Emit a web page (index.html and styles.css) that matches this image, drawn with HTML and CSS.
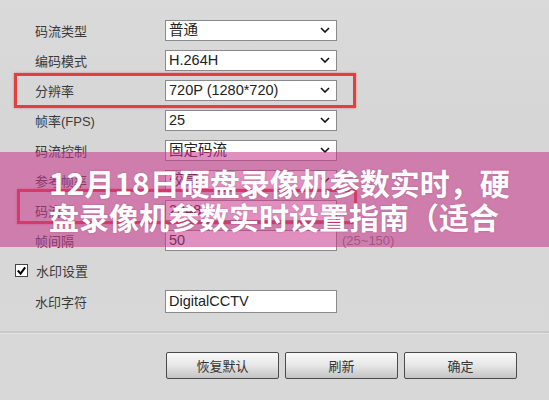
FILE: index.html
```html
<!DOCTYPE html>
<html lang="zh-CN">
<head>
<meta charset="UTF-8" />
<title>硬盘录像机参数设置</title>
<link rel="stylesheet" href="styles.css">
</head>
<body>

<div class="panel">
  <div class="form">
    <div class="row">
      <span class="label">码流类型</span>
      <div class="field select">普通<svg class="chev" viewBox="0 0 10 6"><polyline points="1,1 5,5 9,1"/></svg></div>
    </div>
    <div class="row">
      <span class="label">编码模式</span>
      <div class="field select">H.264H<svg class="chev" viewBox="0 0 10 6"><polyline points="1,1 5,5 9,1"/></svg></div>
    </div>
    <div class="row">
      <span class="label">分辨率</span>
      <div class="field select">720P (1280*720)<svg class="chev" viewBox="0 0 10 6"><polyline points="1,1 5,5 9,1"/></svg></div>
      <div class="mark"></div>
    </div>
    <div class="row">
      <span class="label">帧率(FPS)</span>
      <div class="field select">25<svg class="chev" viewBox="0 0 10 6"><polyline points="1,1 5,5 9,1"/></svg></div>
    </div>
    <div class="row">
      <span class="label">码流控制</span>
      <div class="field select">固定码流<svg class="chev" viewBox="0 0 10 6"><polyline points="1,1 5,5 9,1"/></svg></div>
    </div>
    <div class="row">
      <span class="label">参考帧率</span>
      <div class="field select">较高<svg class="chev" viewBox="0 0 10 6"><polyline points="1,1 5,5 9,1"/></svg></div>
    </div>
    <div class="row">
      <span class="label">码流</span>
      <div class="field">2048</div>
      <div class="mark mark-2"></div>
    </div>
    <div class="row">
      <span class="label">帧间隔</span>
      <div class="field">50</div>
      <span class="hint">(25~150)</span>
    </div>
    <div class="row check-row">
      <span class="check"><svg viewBox="0 0 12 12"><polyline points="2,6 5,9.5 10,2.5"/></svg></span>
      <span class="label">水印设置</span>
    </div>
    <div class="row row-wm">
      <span class="label">水印字符</span>
      <div class="field field-wm">DigitalCCTV</div>
    </div>
  </div>

  <div class="divider"></div>

  <div class="buttons">
    <button class="btn">恢复默认</button>
    <button class="btn">刷新</button>
    <button class="btn">确定</button>
  </div>

  <div class="banner">
    <h1>12月18日硬盘录像机参数实时，硬<br>盘录像机参数实时设置指南（适合</h1>
  </div>
</div>

</body>
</html>
```

FILE: styles.css
```css
body {
  margin: 0;
  background: #d7d7d7;
  font-family: "Liberation Sans", "Noto Sans CJK SC", sans-serif;
  color: #2a2a2a;
}
.panel {
  position: relative;
  width: 549px;
  height: 400px;
  overflow: hidden;
  background: linear-gradient(#dadada, #d6d6d6 30%, #d8d8d8);
}
.form {
  padding-top: 15px;
}
.row {
  position: relative;
  display: flex;
  align-items: center;
  height: 30px;
  padding-left: 35px;
}
.label {
  width: 130px;
  font-size: 13px;
  color: #3a3a3a;
}
.field {
  position: relative;
  box-sizing: border-box;
  width: 172px;
  height: 21px;
  padding: 0 3px;
  background: #fff;
  border: 1px solid #8a8a8a;
  font-size: 14.5px;
  line-height: 19px;
  color: #222;
}
.chev {
  position: absolute;
  right: 6px;
  top: 6px;
  width: 10px;
  height: 6px;
  fill: none;
  stroke: #111;
  stroke-width: 1.6;
}
.hint {
  margin-left: 5px;
  font-size: 13px;
  color: #777;
}

/* red highlight boxes */
.mark {
  position: absolute;
  left: 14px;
  top: -2px;
  width: 342px;
  height: 35px;
  box-sizing: border-box;
  border: 3px solid #e0403f;
  box-shadow: 0 0 2px rgba(226, 59, 59, 0.6);
}
.mark-2 {
  left: 17px;
  top: -6px;
  width: 340px;
}

.check-row {
  padding-left: 15px;
}
.check-row .label {
  margin-left: 8px;
}
.check {
  display: inline-flex;
  box-sizing: border-box;
  width: 13px;
  height: 13px;
  background: #fff;
  border: 1px solid #444;
}
.check svg {
  width: 11px;
  height: 11px;
  fill: none;
  stroke: #000;
  stroke-width: 2.2;
}
.row-wm {
  height: 33px;
}
.field-wm {
  height: 23px;
  line-height: 21px;
}

.divider {
  margin: 13px 0 0;
  height: 2px;
  background: #c9c9c9;
  border-bottom: 1px solid #e2e2e2;
}

.buttons {
  display: flex;
  gap: 6px;
  padding: 18px 0 0 166px;
}
.btn {
  width: 113px;
  height: 27px;
  font-family: "Liberation Sans", "Noto Sans CJK SC", sans-serif;
  font-size: 13px;
  color: #333;
  background: linear-gradient(#fafafa, #e6e6e6 50%, #c4c4c4);
  border: 1px solid #4a4a4a;
  border-radius: 2px;
}

/* title banner over the screenshot */
.banner {
  position: absolute;
  left: 0;
  top: 152px;
  width: 100%;
  height: 95px;
  box-sizing: border-box;
  padding: 13px 0 0 49px;
  background: rgba(200, 56, 140, 0.56);
}
.banner h1 {
  margin: 0;
  font-family: "Noto Sans CJK SC", sans-serif;
  font-size: 30px;
  font-weight: 700;
  line-height: 34px;
  color: #fff;
  white-space: nowrap;
  text-shadow: 0 0 2px rgba(120, 30, 80, 0.3);
}
```
